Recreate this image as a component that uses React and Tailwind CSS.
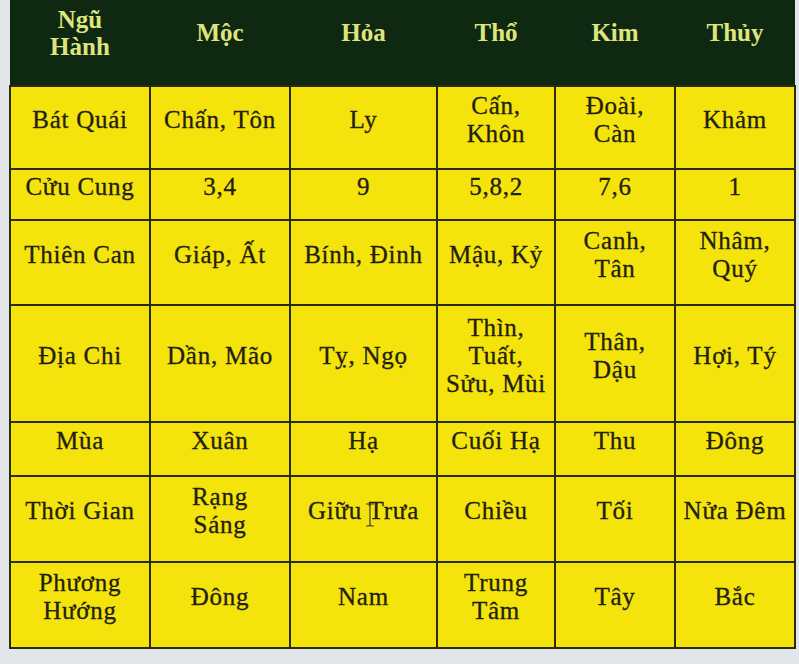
import React from 'react';

// Bảng Ngũ Hành — cells hold explicit lines so wrapping matches the photo
const columns = [
    { head: ['Ngũ', 'Hành'], w: 'w-[140px]' },
    { head: ['Mộc'], w: 'w-[140px]' },
    { head: ['Hỏa'], w: 'w-[147px]' },
    { head: ['Thổ'], w: 'w-[118px]' },
    { head: ['Kim'], w: 'w-[120px]' },
    { head: ['Thủy'], w: 'w-[120px]' },
];

const rows = [
    { h: 'h-[83px]', cells: [['Bát Quái'], ['Chấn, Tôn'], ['Ly'], ['Cấn,', 'Khôn'], ['Đoài,', 'Càn'], ['Khảm']] },
    { h: 'h-[51px]', cells: [['Cửu Cung'], ['3,4'], ['9'], ['5,8,2'], ['7,6'], ['1']] },
    { h: 'h-[85px]', cells: [['Thiên Can'], ['Giáp, Ất'], ['Bính, Đinh'], ['Mậu, Kỷ'], ['Canh,', 'Tân'], ['Nhâm,', 'Quý']] },
    { h: 'h-[117px]', cells: [['Địa Chi'], ['Dần, Mão'], ['Tỵ, Ngọ'], ['Thìn,', 'Tuất,', 'Sửu, Mùi'], ['Thân,', 'Dậu'], ['Hợi, Tý']] },
    { h: 'h-[54px]', cells: [['Mùa'], ['Xuân'], ['Hạ'], ['Cuối Hạ'], ['Thu'], ['Đông']] },
    { h: 'h-[86px]', cells: [['Thời Gian'], ['Rạng', 'Sáng'], ['Giữu Trưa'], ['Chiều'], ['Tối'], ['Nửa Đêm']] },
    { h: 'h-[86px]', cells: [['Phương', 'Hướng'], ['Đông'], ['Nam'], ['Trung', 'Tâm'], ['Tây'], ['Bắc']] },
];

const IBeam = () => (
    <svg width="10" height="24" viewBox="0 0 10 24" className="absolute left-[74px] top-[26px]">
        <path d="M1 1h3l1 1 1-1h3M5 2v20M1 23h3l1-1 1 1h3" fill="none" stroke="#3a3a2a" strokeWidth="1.2" />
    </svg>
);

export default function App() {
    return (
        <div className="w-[799px] h-[664px] bg-[#e3e6e8] pl-[9px] pr-[5px] overflow-hidden [font-family:'Liberation_Serif',serif]">
            <table className="border-collapse table-fixed w-[785px]">
                <thead>
                    <tr className="h-[86px] bg-[#0f2812]">
                        {columns.map((c, i) => (
                            <th key={i} className={`${c.w} align-middle pb-5 text-center font-bold text-[25px] leading-[27px] text-[#dfe57c]`}>
                                {c.head.map((l, j) => <div key={j}>{l}</div>)}
                            </th>
                        ))}
                    </tr>
                </thead>
                <tbody>
                    {rows.map((r, i) => (
                        <tr key={i} className={`${r.h} bg-[#f4e40c]`}>
                            {r.cells.map((lines, j) => (
                                <td key={j} className="relative border-2 border-[#2b2a12] align-middle pb-4 text-center text-[25px] tracking-[0.03em] leading-[28px] text-[#222010] [-webkit-text-stroke:0.3px_#222010] whitespace-nowrap">
                                    {lines.map((l, k) => <div key={k}>{l}</div>)}
                                    {i === 5 && j === 2 && <IBeam />}
                                </td>
                            ))}
                        </tr>
                    ))}
                </tbody>
            </table>
        </div>
    );
}
